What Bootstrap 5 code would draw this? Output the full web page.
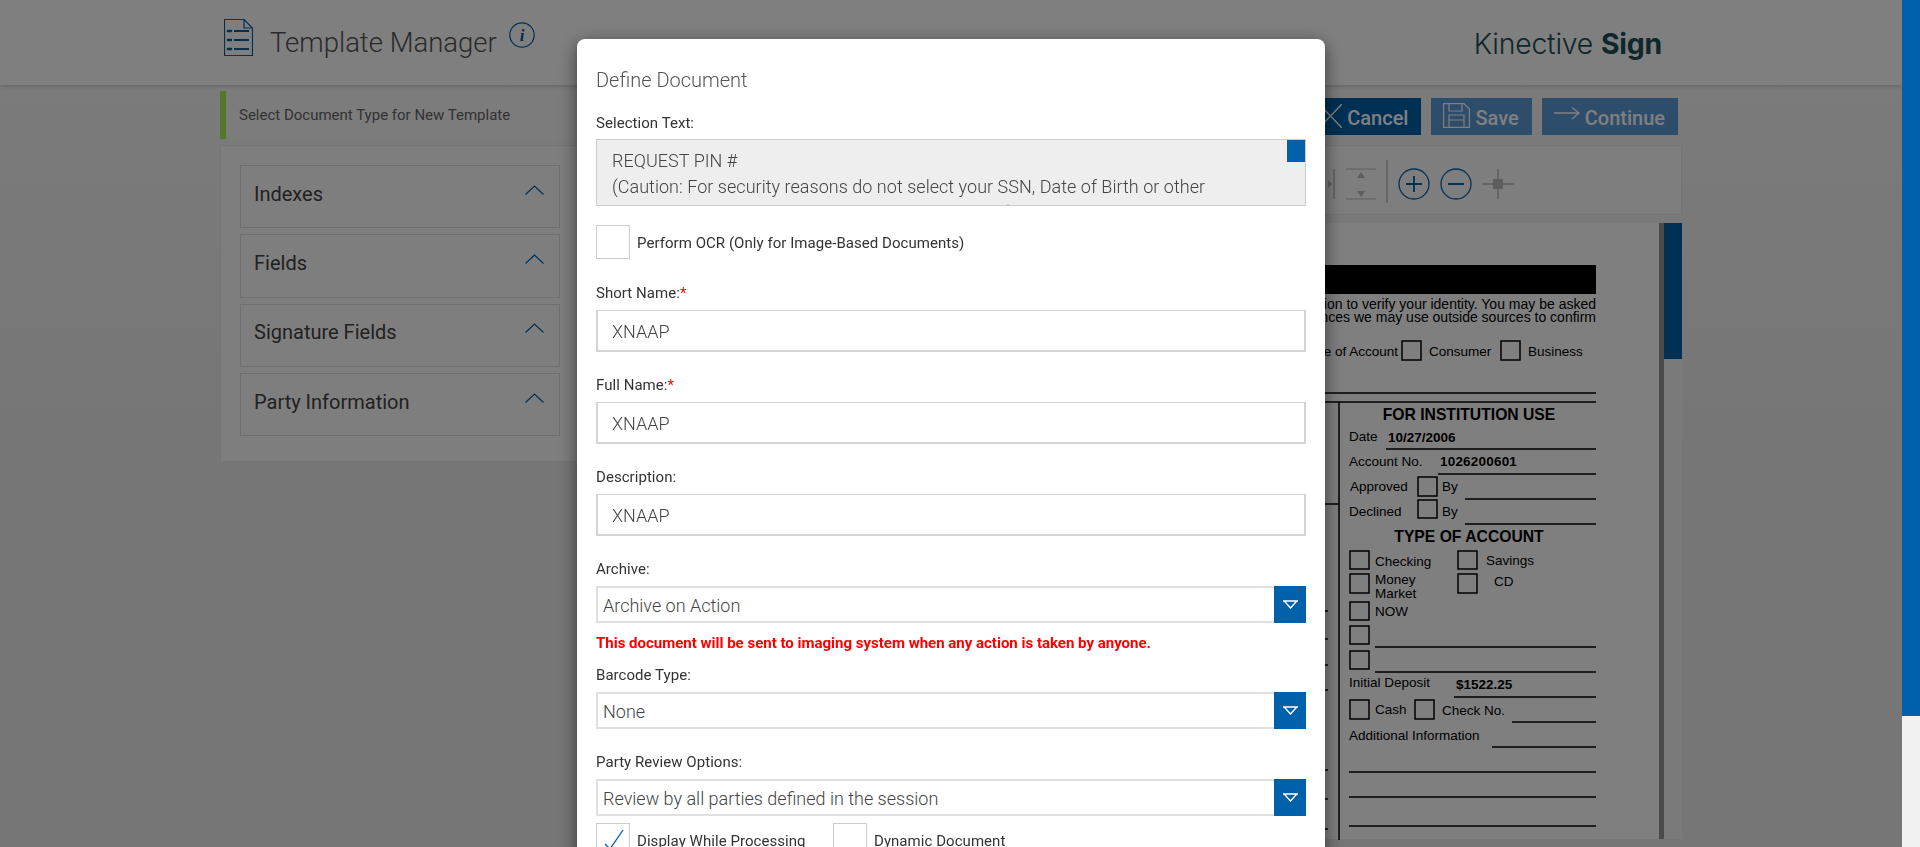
<!DOCTYPE html>
<html lang="en">
<head>
<meta charset="UTF-8">
<title>Template Manager</title>
<meta name="viewport" content="width=device-width, initial-scale=1">
<link href="https://cdn.jsdelivr.net/npm/bootstrap@5.3.2/dist/css/bootstrap.min.css" rel="stylesheet">
<style>
  html, body { height: 100%; overflow: hidden; }
  body { font-family: Roboto, "Liberation Sans", sans-serif; background: linear-gradient(#f8f8f8, #ececec 480px); color: #444; }

  /* page behind the modal */
  .app-shell { width: 1902px; }
  .app-header { height: 85px; background: #fff; box-shadow: 0 1px 4px rgba(0,0,0,.2); }
  .app-wrap { width: 1462px; margin: 0 auto; }
  .app-icon { margin-top: 19px; }
  .app-info { margin-top: 22px; }
  .app-title { font-size: 27.5px; font-weight: 300; color: #555; margin: 0 12px 0 17px; line-height: 85px; }
  .app-logo { font-family: Inter, "Liberation Sans", sans-serif; font-size: 28.4px; font-weight: 300; color: #1c4f55; padding: 4px 20px 0 0; letter-spacing: -.2px; }
  .app-logo b { font-weight: 700; }
  .top-row { height: 60px; padding-top: 6px; }
  .top-btns { gap: 10px; margin: 7px 4px 0 0; }
  .main-row { gap: 10px; }
  .doc-type-bar { height: 48px; border-left: 6px solid #a9ee55; background: #f8f8f8; font-size: 15px; color: #666; padding-left: 13px; }
  .act-btn { height: 37px; border: 0; border-radius: 0; padding: 2px 13px 0 12px; background: #0060a9; color: #fff; font-size: 20px; font-weight: 500; gap: 5px; }
  .act-btn.is-off { background: #5a9ad4; }
  .side-panel { width: 360px; height: 317px; background: #fdfdfd; border: 1px solid #eaeaea; padding: 19px 19px; }
  .acc-head { height: 63.3px; border: 1px solid #dedede; padding: 0 15px 6px 13px; font-size: 20px; color: #444; margin-bottom: 6px; }
  .tool-bar { height: 70px; background: #fdfdfd; border: 1px solid #eaeaea; padding-left: 737px; }
  .doc-panel { height: 617px; margin-top: 8px; background: #fff; border: 1px solid #eaeaea; border-width: 0 0 1px; }
  .doc-canvas { width: 1069px; height: 617px; display: block; flex: none; }
  .doc-canvas text { font-family: "Liberation Sans", sans-serif; font-size: 13.5px; fill: #000; }
  .doc-canvas text.bd { font-weight: 700; }
  .doc-canvas text.hd { font-weight: 700; font-size: 15.7px; text-anchor: middle; }
  .doc-canvas text.wide { font-size: 14px; }
  .doc-strip { width: 5px; background: #969696; }
  .doc-rail { width: 18px; background: #f4f4f4; }
  .doc-thumb { height: 136px; background: #0060a9; }

  /* modal */
  .modal-backdrop.dim-layer { width: auto; right: 18px; opacity: .5; }
  .modal.doc-modal { width: calc(100% - 18px); overflow: hidden; }
  .doc-modal .modal-dialog { max-width: 748px; margin: 39px auto 0; }
  .doc-modal .modal-content { border: 0; border-radius: 8px; box-shadow: 0 5px 18px rgba(0,0,0,.55); padding: 29px 19px 30px; }
  .dlg-title { font-size: 20px; font-weight: 300; color: #555; line-height: 24px; margin: 0 0 21px; }
  .fld-label { font-size: 15px; letter-spacing: .05px; color: #333; line-height: 21px; margin-bottom: 6px; display: block; }
  .fld-label.is-first { margin-bottom: 5px; }
  .fld-label i { color: #f00; font-style: normal; }
  .sel-text { height: 67px; border: 1px solid #ccc; background: #eee; font-size: 18px; letter-spacing: .03px; font-weight: 300; color: #444; line-height: 26px; padding: 8px 18px 0 15px; overflow: hidden; position: relative; }
  .sel-text span { position: absolute; top: 0; right: 0; width: 18px; height: 22px; background: #0060a9; }
  .chk-row { margin: 19px 0 24px; }
  .chk-row-end { margin-top: 7px; }
  .chk-box { width: 34px; height: 34px; border: 1px solid #ccc; flex: none; }
  .chk-label { font-size: 15px; letter-spacing: .05px; color: #333; margin: 2px 0 0 7px; }
  .chk-label.is-fixed { width: 196px; }
  .fld-input.form-control { height: 42px; border: 2px solid #d4d4d4; border-width: 1px 2px 2px 2px; border-radius: 0; font-size: 18px; font-weight: 300; color: #444; padding: 2px 14px 0; display: flex; align-items: center; margin-bottom: 23.5px; }
  .fld-input.is-short.form-control { margin-bottom: 22.5px; }
  .fld-input.is-last.form-control { margin-bottom: 23px; }
  .fld-pick { height: 37px; }
  .fld-pick.is-spaced { margin-bottom: 23.5px; }
  .fld-pick .form-control { border: 2px solid #e0e0e0; border-right: 0; border-radius: 0; font-size: 18px; font-weight: 300; color: #444; padding: 2px 5px 0; display: flex; align-items: center; }
  .fld-pick .btn { width: 32px; padding: 0; background: #0060a9; border: 0; border-radius: 0; display: flex; align-items: center; justify-content: center; }
  .fld-warn { font-size: 15px; font-weight: 700; color: #f00; line-height: 21px; margin: 9.5px 0 11px; }

  /* page scrollbar */
  .page-rail { position: fixed; top: 0; right: 0; bottom: 0; width: 18px; background: #f1f1f1; z-index: 1060; }
  .page-thumb { height: 716px; background: #0060a9; }
</style>
</head>
<body>

<div class="app-shell">
  <header class="app-header">
    <div class="app-wrap d-flex align-items-center justify-content-between h-100">
      <div class="d-flex align-items-start ps-1 h-100">
        <svg class="app-icon" width="29" height="37" viewBox="0 0 29 37" fill="none" stroke="#0060a9"><path d="M.5.5H20L28.5 9V36.5H.5Z M20 .5V9H28.5" stroke-width="1.2"/><g stroke-width="2"><path d="M10 12H25M10 21H25M10 30H25"/><path d="M4 12H7M4 21H7M4 30H7" stroke-linecap="round" stroke-width="2.6"/></g></svg>
        <h1 class="app-title">Template Manager</h1>
        <svg class="app-info" width="26" height="26" viewBox="0 0 26 26" fill="none"><circle cx="13" cy="13" r="12.2" stroke="#0060a9" stroke-width="1.2"/><text x="13" y="19" text-anchor="middle" font-family="Liberation Serif, serif" font-style="italic" font-weight="700" font-size="17" fill="#0060a9">i</text></svg>
      </div>
      <div class="app-logo">Kinective <b>Sign</b></div>
    </div>
  </header>

  <div class="app-wrap">
    <div class="top-row d-flex align-items-start gap-2">
      <div class="doc-type-bar flex-grow-1 d-flex align-items-center">Select Document Type for New Template</div>
      <div class="top-btns d-flex">
        <button class="btn act-btn d-flex align-items-center"><svg class="mb-1" width="24" height="24" viewBox="0 0 24 24" fill="none" stroke="#fff" stroke-width="1.4"><path d="M1 0L24 24M24 0L1 24"/></svg>Cancel</button>
        <button class="btn act-btn is-off d-flex align-items-center"><svg class="mb-1" width="27" height="25" viewBox="0 0 27 25" fill="none" stroke="#fff" stroke-width="1.2"><path d="M.6.6H21L26.4 6V24.4H.6Z M6 .6V8H19V.6 M6 24.4V12H21V24.4 M6 17H21"/></svg>Save</button>
        <button class="btn act-btn is-off d-flex align-items-center"><svg class="mb-2" width="26" height="14" viewBox="0 0 26 14" fill="none" stroke="#fff" stroke-width="1.3"><path d="M0 6H25M18 .5L25 6 18 12"/></svg>Continue</button>
      </div>
    </div>

    <div class="main-row d-flex">
      <aside class="side-panel flex-shrink-0">
        <div class="acc-head d-flex align-items-center justify-content-between">Indexes<svg class="mb-2" width="19" height="10" viewBox="0 0 19 10" fill="none" stroke="#0060a9" stroke-width="1.2"><path d="M.5 9.5L9.5 1 18.5 9.5"/></svg></div>
        <div class="acc-head d-flex align-items-center justify-content-between">Fields<svg class="mb-2" width="19" height="10" viewBox="0 0 19 10" fill="none" stroke="#0060a9" stroke-width="1.2"><path d="M.5 9.5L9.5 1 18.5 9.5"/></svg></div>
        <div class="acc-head d-flex align-items-center justify-content-between">Signature Fields<svg class="mb-2" width="19" height="10" viewBox="0 0 19 10" fill="none" stroke="#0060a9" stroke-width="1.2"><path d="M.5 9.5L9.5 1 18.5 9.5"/></svg></div>
        <div class="acc-head d-flex align-items-center justify-content-between">Party Information<svg class="mb-2" width="19" height="10" viewBox="0 0 19 10" fill="none" stroke="#0060a9" stroke-width="1.2"><path d="M.5 9.5L9.5 1 18.5 9.5"/></svg></div>
      </aside>

      <main class="flex-grow-1">
        <div class="tool-bar d-flex align-items-center">
          <svg width="200" height="70" viewBox="1328 144 200 70" fill="none">
            <path d="M1334 168V198" stroke="#bbb" stroke-width="1.5"/>
            <path d="M1326 177L1332 183 1326 189Z" fill="#bbb"/>
            <path d="M1346 168H1376M1346 198H1376" stroke="#bbb" stroke-width="1.2"/>
            <path d="M1361 171L1365 177H1357ZM1361 196L1365 190H1357Z" fill="#bbb"/>
            <path d="M1387 159V202" stroke="#bbb" stroke-width="1.4"/>
            <g stroke="#0060a9" stroke-width="1.3"><circle cx="1414" cy="183" r="15"/><circle cx="1456" cy="183" r="15"/></g>
            <path d="M1406 183H1422M1414 175V191M1448 183H1464" stroke="#0060a9" stroke-width="1.8"/>
            <path d="M1482 183H1514M1498 168V198" stroke="#bbb" stroke-width="1.5"/>
            <rect x="1493" y="178" width="10" height="10" fill="#bbb"/>
          </svg>
        </div>
        <div class="doc-panel d-flex">
          <svg class="doc-canvas" viewBox="590 223 1069 617" fill="none">
            <rect x="1200" y="265" width="396" height="29" fill="#000"/>
            <g transform="translate(0,-1)">
              <text class="wide" x="1596" y="310" text-anchor="end">We need this information to verify your identity. You may be asked</text>
              <text class="wide" x="1596" y="323" text-anchor="end">for more documents. In some instances we may use outside sources to confirm</text>
              <text x="1398" y="357" text-anchor="end">Type of Account</text>
              <text x="1429" y="357">Consumer</text>
              <text x="1528" y="357">Business</text>
              <text class="hd" x="1469" y="421">FOR INSTITUTION USE</text>
              <text x="1349" y="442">Date</text>
              <text class="bd" x="1388" y="443">10/27/2006</text>
              <text x="1349" y="467">Account No.</text>
              <text class="bd" x="1440" y="467" letter-spacing=".2">1026200601</text>
              <text x="1350" y="492">Approved</text>
              <text x="1442" y="492">By</text>
              <text x="1349" y="517">Declined</text>
              <text x="1442" y="517">By</text>
              <text class="hd" x="1469" y="543">TYPE OF ACCOUNT</text>
              <text x="1375" y="567">Checking</text>
              <text x="1486" y="566">Savings</text>
              <text x="1375" y="585">Money</text>
              <text x="1375" y="599">Market</text>
              <text x="1494" y="587">CD</text>
              <text x="1375" y="617">NOW</text>
              <text x="1349" y="688">Initial Deposit</text>
              <text class="bd" x="1456" y="690">$1522.25</text>
              <text x="1375" y="715">Cash</text>
              <text x="1442" y="716">Check No.</text>
              <text x="1349" y="741">Additional Information</text>
            </g>
            <g stroke="#000" stroke-width="1.5">
              <path d="M1200 393H1596M1200 402H1596M1339 402V840M1200 504H1339"/>
              <path d="M1386 449H1596M1438 474H1596M1465 499H1596M1465 524H1596M1375 647H1596M1375 672H1596M1454 697H1596M1512 722H1596M1492 747H1596M1349 772H1596M1349 797H1596M1349 826H1596"/>
              <path d="M1200 611H1328M1200 639H1328M1200 665H1328M1200 690H1328M1200 770H1328M1200 799H1328M1200 829H1328"/>
              <rect x="1402" y="341" width="19" height="19"/><rect x="1501" y="341" width="19" height="19"/>
              <rect x="1418" y="477" width="19" height="19"/><rect x="1418" y="500" width="19" height="18"/>
              <rect x="1350" y="551" width="19" height="18"/><rect x="1458" y="551" width="19" height="18"/>
              <rect x="1350" y="574" width="19" height="19"/><rect x="1458" y="574" width="19" height="19"/>
              <rect x="1350" y="602" width="19" height="18"/><rect x="1350" y="626" width="19" height="18"/>
              <rect x="1350" y="651" width="19" height="18"/><rect x="1350" y="700" width="19" height="19"/>
              <rect x="1415" y="700" width="19" height="19"/>
            </g>
          </svg>
          <div class="doc-strip"></div>
          <div class="doc-rail"><div class="doc-thumb"></div></div>
        </div>
      </main>
    </div>
  </div>
</div>

<div class="modal-backdrop dim-layer show"></div>

<div class="modal doc-modal d-block" tabindex="-1">
  <div class="modal-dialog">
    <div class="modal-content">
      <h5 class="dlg-title">Define Document</h5>

      <label class="fld-label is-first">Selection Text:</label>
      <div class="sel-text">REQUEST PIN #<br>(Caution: For security reasons do not select your SSN, Date of Birth or other<br>personal or listed identifiers to be used as the PIN.)<span></span></div>

      <div class="chk-row d-flex align-items-center">
        <div class="chk-box"></div>
        <span class="chk-label">Perform OCR (Only for Image-Based Documents)</span>
      </div>

      <label class="fld-label">Short Name:<i>*</i></label>
      <div class="form-control fld-input is-short">XNAAP</div>
      <label class="fld-label">Full Name:<i>*</i></label>
      <div class="form-control fld-input">XNAAP</div>
      <label class="fld-label">Description:</label>
      <div class="form-control fld-input is-last">XNAAP</div>

      <label class="fld-label">Archive:</label>
      <div class="input-group flex-nowrap fld-pick">
        <div class="form-control">Archive on Action</div>
        <button class="btn" type="button"><svg width="15" height="9" viewBox="0 0 15 9" fill="none" stroke="#fff" stroke-width="1.4"><path d="M0 1H15M1.2 1L7.5 8 13.8 1"/></svg></button>
      </div>
      <div class="fld-warn">This document will be sent to imaging system when any action is taken by anyone.</div>

      <label class="fld-label">Barcode Type:</label>
      <div class="input-group flex-nowrap fld-pick is-spaced">
        <div class="form-control">None</div>
        <button class="btn" type="button"><svg width="15" height="9" viewBox="0 0 15 9" fill="none" stroke="#fff" stroke-width="1.4"><path d="M0 1H15M1.2 1L7.5 8 13.8 1"/></svg></button>
      </div>

      <label class="fld-label">Party Review Options:</label>
      <div class="input-group flex-nowrap fld-pick">
        <div class="form-control">Review by all parties defined in the session</div>
        <button class="btn" type="button"><svg width="15" height="9" viewBox="0 0 15 9" fill="none" stroke="#fff" stroke-width="1.4"><path d="M0 1H15M1.2 1L7.5 8 13.8 1"/></svg></button>
      </div>

      <div class="chk-row-end d-flex align-items-center">
        <div class="chk-box d-flex"><svg width="32" height="32" viewBox="0 0 32 32" fill="none" stroke="#0060a9" stroke-width="1.3"><path d="M8 20L13 25 26 6"/></svg></div>
        <span class="chk-label is-fixed">Display While Processing</span>
        <div class="chk-box"></div>
        <span class="chk-label">Dynamic Document</span>
      </div>
    </div>
  </div>
</div>

<div class="page-rail"><div class="page-thumb"></div></div>

<script src="https://cdn.jsdelivr.net/npm/bootstrap@5.3.2/dist/js/bootstrap.bundle.min.js"></script>
</body>
</html>
